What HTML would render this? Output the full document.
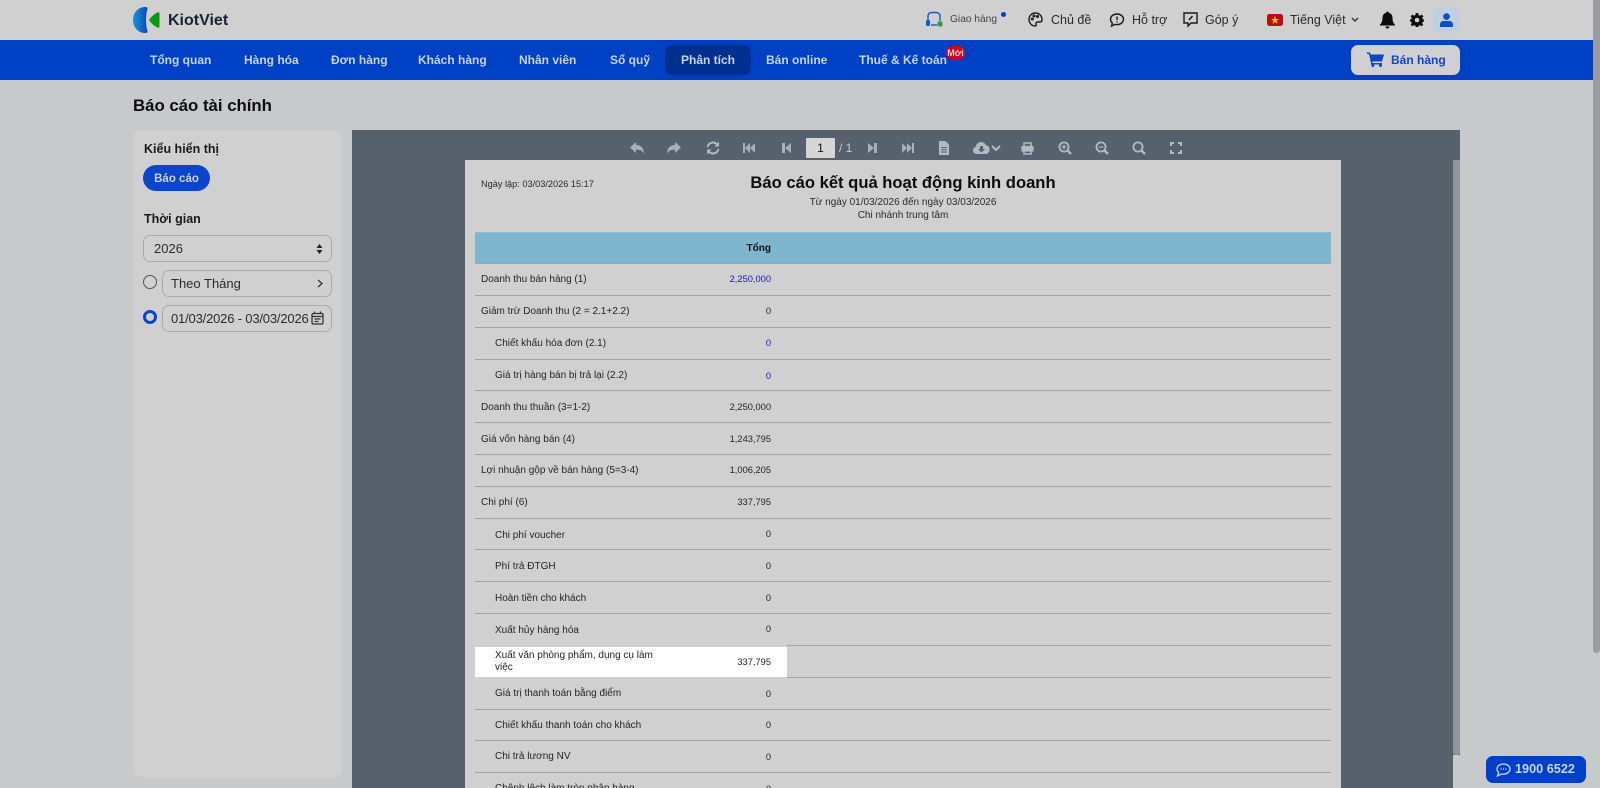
<!DOCTYPE html>
<html lang="vi"><head><meta charset="utf-8"><title>Báo cáo tài chính</title>
<style>
*{box-sizing:border-box}
html,body{margin:0;width:1600px;height:788px;overflow:hidden;background:#c8c9cb;font-family:"Liberation Sans",sans-serif;color:#111}
#w{position:absolute;left:0;top:0;width:1600px;height:788px;overflow:hidden;filter:blur(.35px)}
.a{position:absolute;white-space:nowrap}
svg{position:absolute;display:block}
.n{top:51px;font-size:12px;font-weight:700;color:#c6d3ea;line-height:18px}
.h{top:11px;font-size:12.5px;color:#2a2a2a;line-height:18px}
.box{border:1px solid #a9abaf;border-radius:7px;background:#d0d0d0}
.l{left:481px;font-size:10px;color:#242424;width:200px;white-space:normal;line-height:12px}
.v{left:671px;width:100px;text-align:right;font-size:9.3px;color:#242424;line-height:12px}
.b{color:#1a10c8}
.ln{left:475px;width:856px;height:1px;background:#a3a3a3}
.t{fill:#a9afb6}
</style></head><body><div id="w">
<div class="a" style="left:0;top:0;width:1600px;height:40px;background:#d0d0d0"></div>
<div class="a" style="left:0;top:40px;width:1593px;height:40px;background:#0040c4"></div>
<div class="a" style="left:1593px;top:0;width:7px;height:653px;background:#9a9ca2;border-radius:0 0 4px 4px"></div>

<svg style="left:133px;top:6px" width="28" height="28" viewBox="0 0 28 28"><defs><linearGradient id="g" x1="0" x2="1"><stop offset="0" stop-color="#1b93d6"/><stop offset="1" stop-color="#0b49b4"/></linearGradient></defs><path d="M12 1C14 1 15 1.5 14.5 3C12.5 9 12.5 19 14.5 25C15 26.5 14 27 12 27C5 27 0 21 0 14C0 7 5 1 12 1Z" fill="url(#g)"/><path d="M26.5 7.5V20.5C26.5 21.5 25.5 22 24.5 21.5C21 20 18 17 16 14C18 11 21 8 24.5 6.5C25.5 6 26.5 6.5 26.5 7.5Z" fill="#079a0e"/></svg>
<div class="a" style="left:168px;top:11px;font-size:16px;font-weight:700;color:#192233;line-height:20px">KiotViet</div>

<svg style="left:925px;top:11px" width="19" height="18" viewBox="0 0 19 18" fill="none"><path d="M3 9V5C3 2.5 5 1.5 7 1.5H11C13.5 1.5 15 3 15 5V10" stroke="#1a55c8" stroke-width="1.4"/><rect x="1" y="9" width="4" height="6" rx="1.5" fill="#1a55c8"/><path d="M6 14H12" stroke="#1a55c8" stroke-width="1.4"/><rect x="12.5" y="10.5" width="5" height="5" rx="1.2" fill="#2c9b3d"/></svg>
<div class="a h" style="left:950px;font-size:10.2px;color:#444">Giao hàng</div>
<div class="a" style="left:1001px;top:12px;width:5px;height:5px;border-radius:50%;background:#0040c4"></div>
<svg style="left:1028px;top:12px" width="15" height="15" viewBox="0 0 15 15" fill="none" stroke="#1a1a1a" stroke-width="1.4"><path d="M7.5 1C3.5 1 1 4 1 7.5C1 11 3.8 14 7 14C8.5 14 8.3 12.7 8 12C7.6 10.8 8.4 10 9.6 10H12C13.4 10 14 9 14 7.5C14 3.8 11 1 7.5 1Z"/><circle cx="4.3" cy="7" r=".8"/><circle cx="6" cy="4" r=".8"/><circle cx="9.5" cy="4.5" r=".8"/></svg>
<div class="a h" style="left:1051px">Chủ đề</div>
<svg style="left:1109px;top:12px" width="16" height="16" viewBox="0 0 16 16" fill="none" stroke="#1a1a1a" stroke-width="1.4"><path d="M8 2C4.2 2 1.5 4.4 1.5 7.3C1.5 8.8 2.2 10 3.3 11L2.6 14L6 12.4C6.6 12.5 7.3 12.6 8 12.6C11.8 12.6 14.5 10.2 14.5 7.3C14.5 4.4 11.8 2 8 2Z"/><path d="M8 4.5V8M8 9.2V10.4"/></svg>
<div class="a h" style="left:1132px">Hỗ trợ</div>
<svg style="left:1183px;top:12px" width="15" height="16" viewBox="0 0 15 16" fill="none" stroke="#1a1a1a" stroke-width="1.4"><path d="M1 1H14V11H8L5 14V11H1Z"/><path d="M9.5 4L6 8" stroke-width="1.6"/></svg>
<div class="a h" style="left:1205px">Góp ý</div>
<div class="a" style="left:1267px;top:14px;width:16px;height:12px;border-radius:2.5px;background:#b80f12"></div>
<svg style="left:1271px;top:16px" width="8" height="8" viewBox="0 0 8 8"><path d="M4 0L5 3H8L5.6 4.8L6.5 8L4 6L1.5 8L2.4 4.8L0 3H3Z" fill="#f2c418"/></svg>
<div class="a h" style="left:1290px">Tiếng Việt</div>
<svg style="left:1351px;top:17px" width="8" height="6" viewBox="0 0 8 6" fill="none" stroke="#333" stroke-width="1.4"><path d="M1 1L4 4L7 1"/></svg>
<svg style="left:1380px;top:11px" width="15" height="18" viewBox="0 0 15 18"><path d="M7.5 0.5C8.3 0.5 8.8 1 8.8 1.8C11.5 2.5 12.5 4.6 12.5 7C12.5 10.5 13.5 12 15 13.6V14.5H0V13.6C1.5 12 2.5 10.5 2.5 7C2.5 4.6 3.5 2.5 6.2 1.8C6.2 1 6.7 .5 7.5 .5ZM5.5 15.5H9.5C9.5 16.8 8.6 17.5 7.5 17.5C6.4 17.5 5.5 16.8 5.5 15.5Z" fill="#0b0b0b"/></svg>
<svg style="left:1410px;top:13px" width="14" height="14" viewBox="0 0 14 14"><path d="M5.8 0H8.2L8.6 2L10 2.7L11.8 1.6L13.4 3.3L12.2 5L12.8 6.2L14 6.6V8.4L12.7 9L12.2 10L13.2 11.9L11.6 13.3L10 12.2L8.6 12.8L8.2 14H5.8L5.4 12.8L4 12.2L2.3 13.3L.7 11.8L1.8 10L1.3 9L0 8.4V6.6L1.3 6.2L1.8 5L.7 3.2L2.2 1.6L4 2.7L5.4 2Z" fill="#0b0b0b"/><circle cx="7" cy="7" r="2.3" fill="#d0d0d0"/></svg>
<div class="a" style="left:1433px;top:7px;width:27px;height:26px;border-radius:8px;background:#c0cfe0"></div>
<svg style="left:1440px;top:13px" width="13" height="14" viewBox="0 0 13 14"><circle cx="6.5" cy="3.6" r="3.4" fill="#0d4fca"/><path d="M0 14V11.5C0 9.2 2 8 3.5 8H9.5C11 8 13 9.2 13 11.5V14Z" fill="#0d4fca"/></svg>

<div class="a n" style="left:150px">Tổng quan</div>
<div class="a n" style="left:244px">Hàng hóa</div>
<div class="a n" style="left:331px">Đơn hàng</div>
<div class="a n" style="left:418px">Khách hàng</div>
<div class="a n" style="left:519px">Nhân viên</div>
<div class="a n" style="left:610px">Sổ quỹ</div>
<div class="a" style="left:665px;top:45px;width:86px;height:30px;border-radius:7px;background:#00308f"></div>
<div class="a n" style="left:681px">Phân tích</div>
<div class="a n" style="left:766px">Bán online</div>
<div class="a n" style="left:859px">Thuế &amp; Kế toán</div>
<div class="a" style="left:946px;top:46px;width:19px;height:14px;border-radius:7px;background:#d2001c;color:#e8d8dc;font-size:9px;font-weight:700;text-align:center;line-height:14px">Mới</div>
<div class="a" style="left:1351px;top:45px;width:109px;height:30px;border-radius:7px;background:#d0d0d4"></div>
<svg style="left:1367px;top:52px" width="17" height="15" viewBox="0 0 17 15"><path d="M0 0.5H3L3.6 2.5H17L15 9.5H5.2L5.6 11H15V12.5H4.3L2 2H0Z" fill="#0d45c4"/><circle cx="5.8" cy="13.5" r="1.5" fill="#0d45c4"/><circle cx="13.5" cy="13.5" r="1.5" fill="#0d45c4"/></svg>
<div class="a" style="left:1391px;top:51px;font-size:12px;font-weight:700;color:#0d45c4;line-height:18px">Bán hàng</div>

<div class="a" style="left:133px;top:96px;font-size:16.8px;font-weight:700;color:#0d0d0d;line-height:20px">Báo cáo tài chính</div>

<div class="a" style="left:133px;top:130px;width:209px;height:647px;border-radius:8px;background:#d0d0d0"></div>
<div class="a" style="left:144px;top:141px;font-size:12.5px;font-weight:700;color:#1a1a1a;line-height:16px">Kiểu hiển thị</div>
<div class="a" style="left:143px;top:165px;width:67px;height:26px;border-radius:13px;background:#0a45cc;color:#c8d4ea;font-size:11.5px;font-weight:700;text-align:center;line-height:28px">Báo cáo</div>
<div class="a" style="left:144px;top:211px;font-size:12.5px;font-weight:700;color:#1a1a1a;line-height:16px">Thời gian</div>
<div class="a box" style="left:143px;top:235px;width:189px;height:27px"></div>
<div class="a" style="left:154px;top:240px;font-size:13px;color:#2b2b2b;line-height:17px">2026</div>
<svg style="left:316px;top:244px" width="7" height="10" viewBox="0 0 7 10"><path d="M3.5 0L6.5 4H.5ZM3.5 10L.5 6H6.5Z" fill="#222"/></svg>
<div class="a" style="left:143px;top:275px;width:14px;height:14px;border-radius:50%;border:1px solid #555;background:#d0d0d0"></div>
<div class="a box" style="left:162px;top:270px;width:170px;height:27px"></div>
<div class="a" style="left:171px;top:275px;font-size:13px;color:#2b2b2b;line-height:17px">Theo Tháng</div>
<svg style="left:317px;top:279px" width="6" height="9" viewBox="0 0 6 9" fill="none" stroke="#333" stroke-width="1.3"><path d="M1 1L5 4.5L1 8"/></svg>
<div class="a" style="left:143px;top:310px;width:14px;height:14px;border-radius:50%;border:3.5px solid #0a45cc;background:#d0d0d0"></div>
<div class="a box" style="left:162px;top:305px;width:170px;height:27px"></div>
<div class="a" style="left:171px;top:310px;font-size:13px;color:#2b2b2b;line-height:17px;letter-spacing:-.18px">01/03/2026 - 03/03/2026</div>
<svg style="left:311px;top:311px" width="13" height="14" viewBox="0 0 13 14" fill="none" stroke="#333" stroke-width="1.3"><rect x="1" y="2.5" width="11" height="10.5" rx="1.2"/><path d="M1 5.5H12M3.5 0.5V3M9.5 0.5V3M3.5 8H9.5M3.5 10.5H7.5"/></svg>

<div class="a" style="left:352px;top:130px;width:1108px;height:658px;background:#56616d"></div>
<div class="a" style="left:1453px;top:160px;width:7px;height:595px;background:#92959c;border-radius:0 0 3px 3px"></div>
<div class="a" style="left:1453px;top:755px;width:7px;height:33px;background:#c8c9cb"></div>

<svg style="left:630px;top:142px" width="14" height="12" viewBox="0 0 14 12"><path class="t" d="M6 0V3C10.5 3 14 5.5 14 12C12.6 8.8 10 7.6 6 7.6V11L0 5.5Z"/></svg>
<svg style="left:667px;top:142px" width="14" height="12" viewBox="0 0 14 12"><path class="t" d="M8 0V3C3.5 3 0 5.5 0 12C1.4 8.8 4 7.6 8 7.6V11L14 5.5Z"/></svg>
<svg style="left:706px;top:141px" width="14" height="14" viewBox="0 0 14 14" fill="none" stroke="#b4bac1" stroke-width="2"><path d="M1.5 6C2.2 3.2 4.4 1.5 7 1.5C8.8 1.5 10.4 2.4 11.5 3.8M12.5 8C11.8 10.8 9.6 12.5 7 12.5C5.2 12.5 3.6 11.6 2.5 10.2"/><path d="M13 .5V5.5H8.5Z" fill="#b4bac1" stroke="none"/><path d="M1 13.5V8.5H5.5Z" fill="#b4bac1" stroke="none"/></svg>
<svg style="left:743px;top:143px" width="12" height="10" viewBox="0 0 12 10"><path class="t" d="M0 0H2V10H0ZM7 0V10L2 5ZM12 0V10L7 5Z"/></svg>
<svg style="left:782px;top:143px" width="9" height="10" viewBox="0 0 9 10"><path class="t" d="M0 0H3V10H0ZM9 0V10L3 5Z"/></svg>
<div class="a" style="left:806px;top:138px;width:29px;height:20px;background:#d6d6d6;border-radius:1px;text-align:center;font-size:12px;line-height:20px;color:#111">1</div>
<div class="a" style="left:839px;top:140px;font-size:12px;line-height:16px;color:#c5cad0">/ 1</div>
<svg style="left:868px;top:143px" width="9" height="10" viewBox="0 0 9 10"><path class="t" d="M9 0H6V10H9ZM0 0V10L6 5Z"/></svg>
<svg style="left:902px;top:143px" width="12" height="10" viewBox="0 0 12 10"><path class="t" d="M12 0H10V10H12ZM5 0V10L10 5ZM0 0V10L5 5Z"/></svg>
<svg style="left:939px;top:141px" width="10" height="14" viewBox="0 0 10 14"><path d="M0 0H6.5L10 3.5V14H0Z" fill="#b4bac1"/><path d="M2 6.5H8M2 8.8H8M2 11H8" stroke="#56616d"/></svg>
<svg style="left:973px;top:142px" width="29" height="12" viewBox="0 0 29 12"><path d="M4 12C1.5 12 0 10.4 0 8.4C0 6.6 1.2 5.4 2.6 5C3 2.2 5.4 0 8 0C10.5 0 12.4 1.4 13 3.4C15.2 3.4 16.5 5.2 16.5 7.6C16.5 10.2 14.8 12 12.5 12Z" fill="#b4bac1"/><path d="M7 4H10V7H12L8.5 10.5L5 7H7Z" fill="#56616d"/><path d="M19 4L23 8L27 4" fill="none" stroke="#b4bac1" stroke-width="2"/></svg>
<svg style="left:1021px;top:142px" width="13" height="13" viewBox="0 0 13 13" fill="none" stroke="#b4bac1"><path d="M3 4V1H10V4" stroke-width="1.5"/><path d="M1 4.5H12V9H1Z" fill="#b4bac1" stroke-width="1.2"/><path d="M3 8V12H10V8" stroke-width="1.5"/></svg>
<svg style="left:1058px;top:141px" width="14" height="14" viewBox="0 0 14 14" fill="none" stroke="#b4bac1"><circle cx="6" cy="6" r="4.6" stroke-width="1.8"/><path d="M9.5 9.5L13 13" stroke-width="2.4"/><path d="M3.8 6H8.2M6 3.8V8.2" stroke-width="1.2"/></svg>
<svg style="left:1095px;top:141px" width="14" height="14" viewBox="0 0 14 14" fill="none" stroke="#b4bac1"><circle cx="6" cy="6" r="4.6" stroke-width="1.8"/><path d="M9.5 9.5L13 13" stroke-width="2.4"/><path d="M3.8 6H8.2" stroke-width="1.2"/></svg>
<svg style="left:1132px;top:141px" width="14" height="14" viewBox="0 0 14 14" fill="none" stroke="#b4bac1"><circle cx="6" cy="6" r="4.6" stroke-width="1.8"/><path d="M9.5 9.5L13 13" stroke-width="2.4"/></svg>
<svg style="left:1170px;top:142px" width="12" height="12" viewBox="0 0 12 12" fill="none" stroke="#b4bac1" stroke-width="2"><path d="M1 4V1H4M8 1H11V4M11 8V11H8M4 11H1V8"/></svg>

<div class="a" style="left:465px;top:160px;width:876px;height:628px;background:#d0d0d0"></div>
<div class="a" style="left:481px;top:178px;font-size:9.2px;color:#2a2a2a;line-height:12px">Ngày lập: 03/03/2026 15:17</div>
<div class="a" style="left:465px;top:172px;width:876px;text-align:center;font-size:16.6px;font-weight:700;color:#0c0c0c;line-height:22px">Báo cáo kết quả hoạt động kinh doanh</div>
<div class="a" style="left:465px;top:196px;width:876px;text-align:center;font-size:10px;color:#2a2a2a;line-height:13px">Từ ngày 01/03/2026 đến ngày 03/03/2026<br>Chi nhánh trung tâm</div>
<div class="a" style="left:475px;top:232px;width:856px;height:32px;background:#80b5cf;border-top:1px solid #9bbccb;border-bottom:1px solid #8aa8bb"></div>
<div class="a v" style="top:243px;font-size:10px;font-weight:700;color:#111">Tổng</div>

<div class="a l" style="top:274px">Doanh thu bán hàng (1)</div><div class="a v b" style="top:273px">2,250,000</div><div class="a ln" style="top:295px"></div>
<div class="a l" style="top:306px">Giảm trừ Doanh thu (2 = 2.1+2.2)</div><div class="a v" style="top:305px">0</div><div class="a ln" style="top:327px"></div>
<div class="a l" style="top:338px;left:495px">Chiết khấu hóa đơn (2.1)</div><div class="a v b" style="top:337px">0</div><div class="a ln" style="top:359px"></div>
<div class="a l" style="top:370px;left:495px">Giá trị hàng bán bị trả lại (2.2)</div><div class="a v b" style="top:370px">0</div><div class="a ln" style="top:390px"></div>
<div class="a l" style="top:402px">Doanh thu thuần (3=1-2)</div><div class="a v" style="top:401px">2,250,000</div><div class="a ln" style="top:422px"></div>
<div class="a l" style="top:434px">Giá vốn hàng bán (4)</div><div class="a v" style="top:433px">1,243,795</div><div class="a ln" style="top:454px"></div>
<div class="a l" style="top:465px">Lợi nhuận gộp về bán hàng (5=3-4)</div><div class="a v" style="top:464px">1,006,205</div><div class="a ln" style="top:486px"></div>
<div class="a l" style="top:497px">Chi phí (6)</div><div class="a v" style="top:496px">337,795</div><div class="a ln" style="top:518px"></div>
<div class="a l" style="top:530px;left:495px">Chi phí voucher</div><div class="a v" style="top:528px">0</div><div class="a ln" style="top:549px"></div>
<div class="a l" style="top:561px;left:495px">Phí trả ĐTGH</div><div class="a v" style="top:560px">0</div><div class="a ln" style="top:581px"></div>
<div class="a l" style="top:593px;left:495px">Hoàn tiền cho khách</div><div class="a v" style="top:592px">0</div><div class="a ln" style="top:613px"></div>
<div class="a l" style="top:625px;left:495px">Xuất hủy hàng hóa</div><div class="a v" style="top:623px">0</div><div class="a ln" style="top:645px;left:787px;width:544px"></div>
<div class="a" style="left:475px;top:647px;width:312px;height:30px;background:#fff"></div>
<div class="a l" style="top:650px;left:495px;width:170px">Xuất văn phòng phẩm, dụng cụ làm việc</div><div class="a v" style="top:656px">337,795</div><div class="a ln" style="top:677px;left:787px;width:544px"></div>
<div class="a l" style="top:688px;left:495px">Giá trị thanh toán bằng điểm</div><div class="a v" style="top:688px">0</div><div class="a ln" style="top:709px"></div>
<div class="a l" style="top:720px;left:495px">Chiết khấu thanh toán cho khách</div><div class="a v" style="top:719px">0</div><div class="a ln" style="top:740px"></div>
<div class="a l" style="top:751px;left:495px">Chi trả lương NV</div><div class="a v" style="top:751px">0</div><div class="a ln" style="top:772px"></div>
<div class="a l" style="top:783px;left:495px">Chênh lệch làm tròn phân hàng</div><div class="a v" style="top:783px">0</div>

<div class="a" style="left:1486px;top:756px;width:100px;height:27px;border-radius:7px;background:#0040c8"></div>
<svg style="left:1496px;top:763px" width="15" height="14" viewBox="0 0 15 14" fill="none" stroke="#c8d4ea" stroke-width="1.3"><path d="M7.5 1C3.8 1 1 3.2 1 6C1 7.3 1.6 8.5 2.6 9.4L1.5 13L5.5 11C6.2 11.1 6.8 11.2 7.5 11.2C11.2 11.2 14 8.9 14 6C14 3.2 11.2 1 7.5 1Z"/><path d="M4.5 6H5.5M7 6H8M9.5 6H10.5" stroke-width="1.5"/></svg>
<div class="a" style="left:1515px;top:761px;font-size:12.7px;font-weight:700;color:#c8d4ea;line-height:17px">1900 6522</div>
</div></body></html>
